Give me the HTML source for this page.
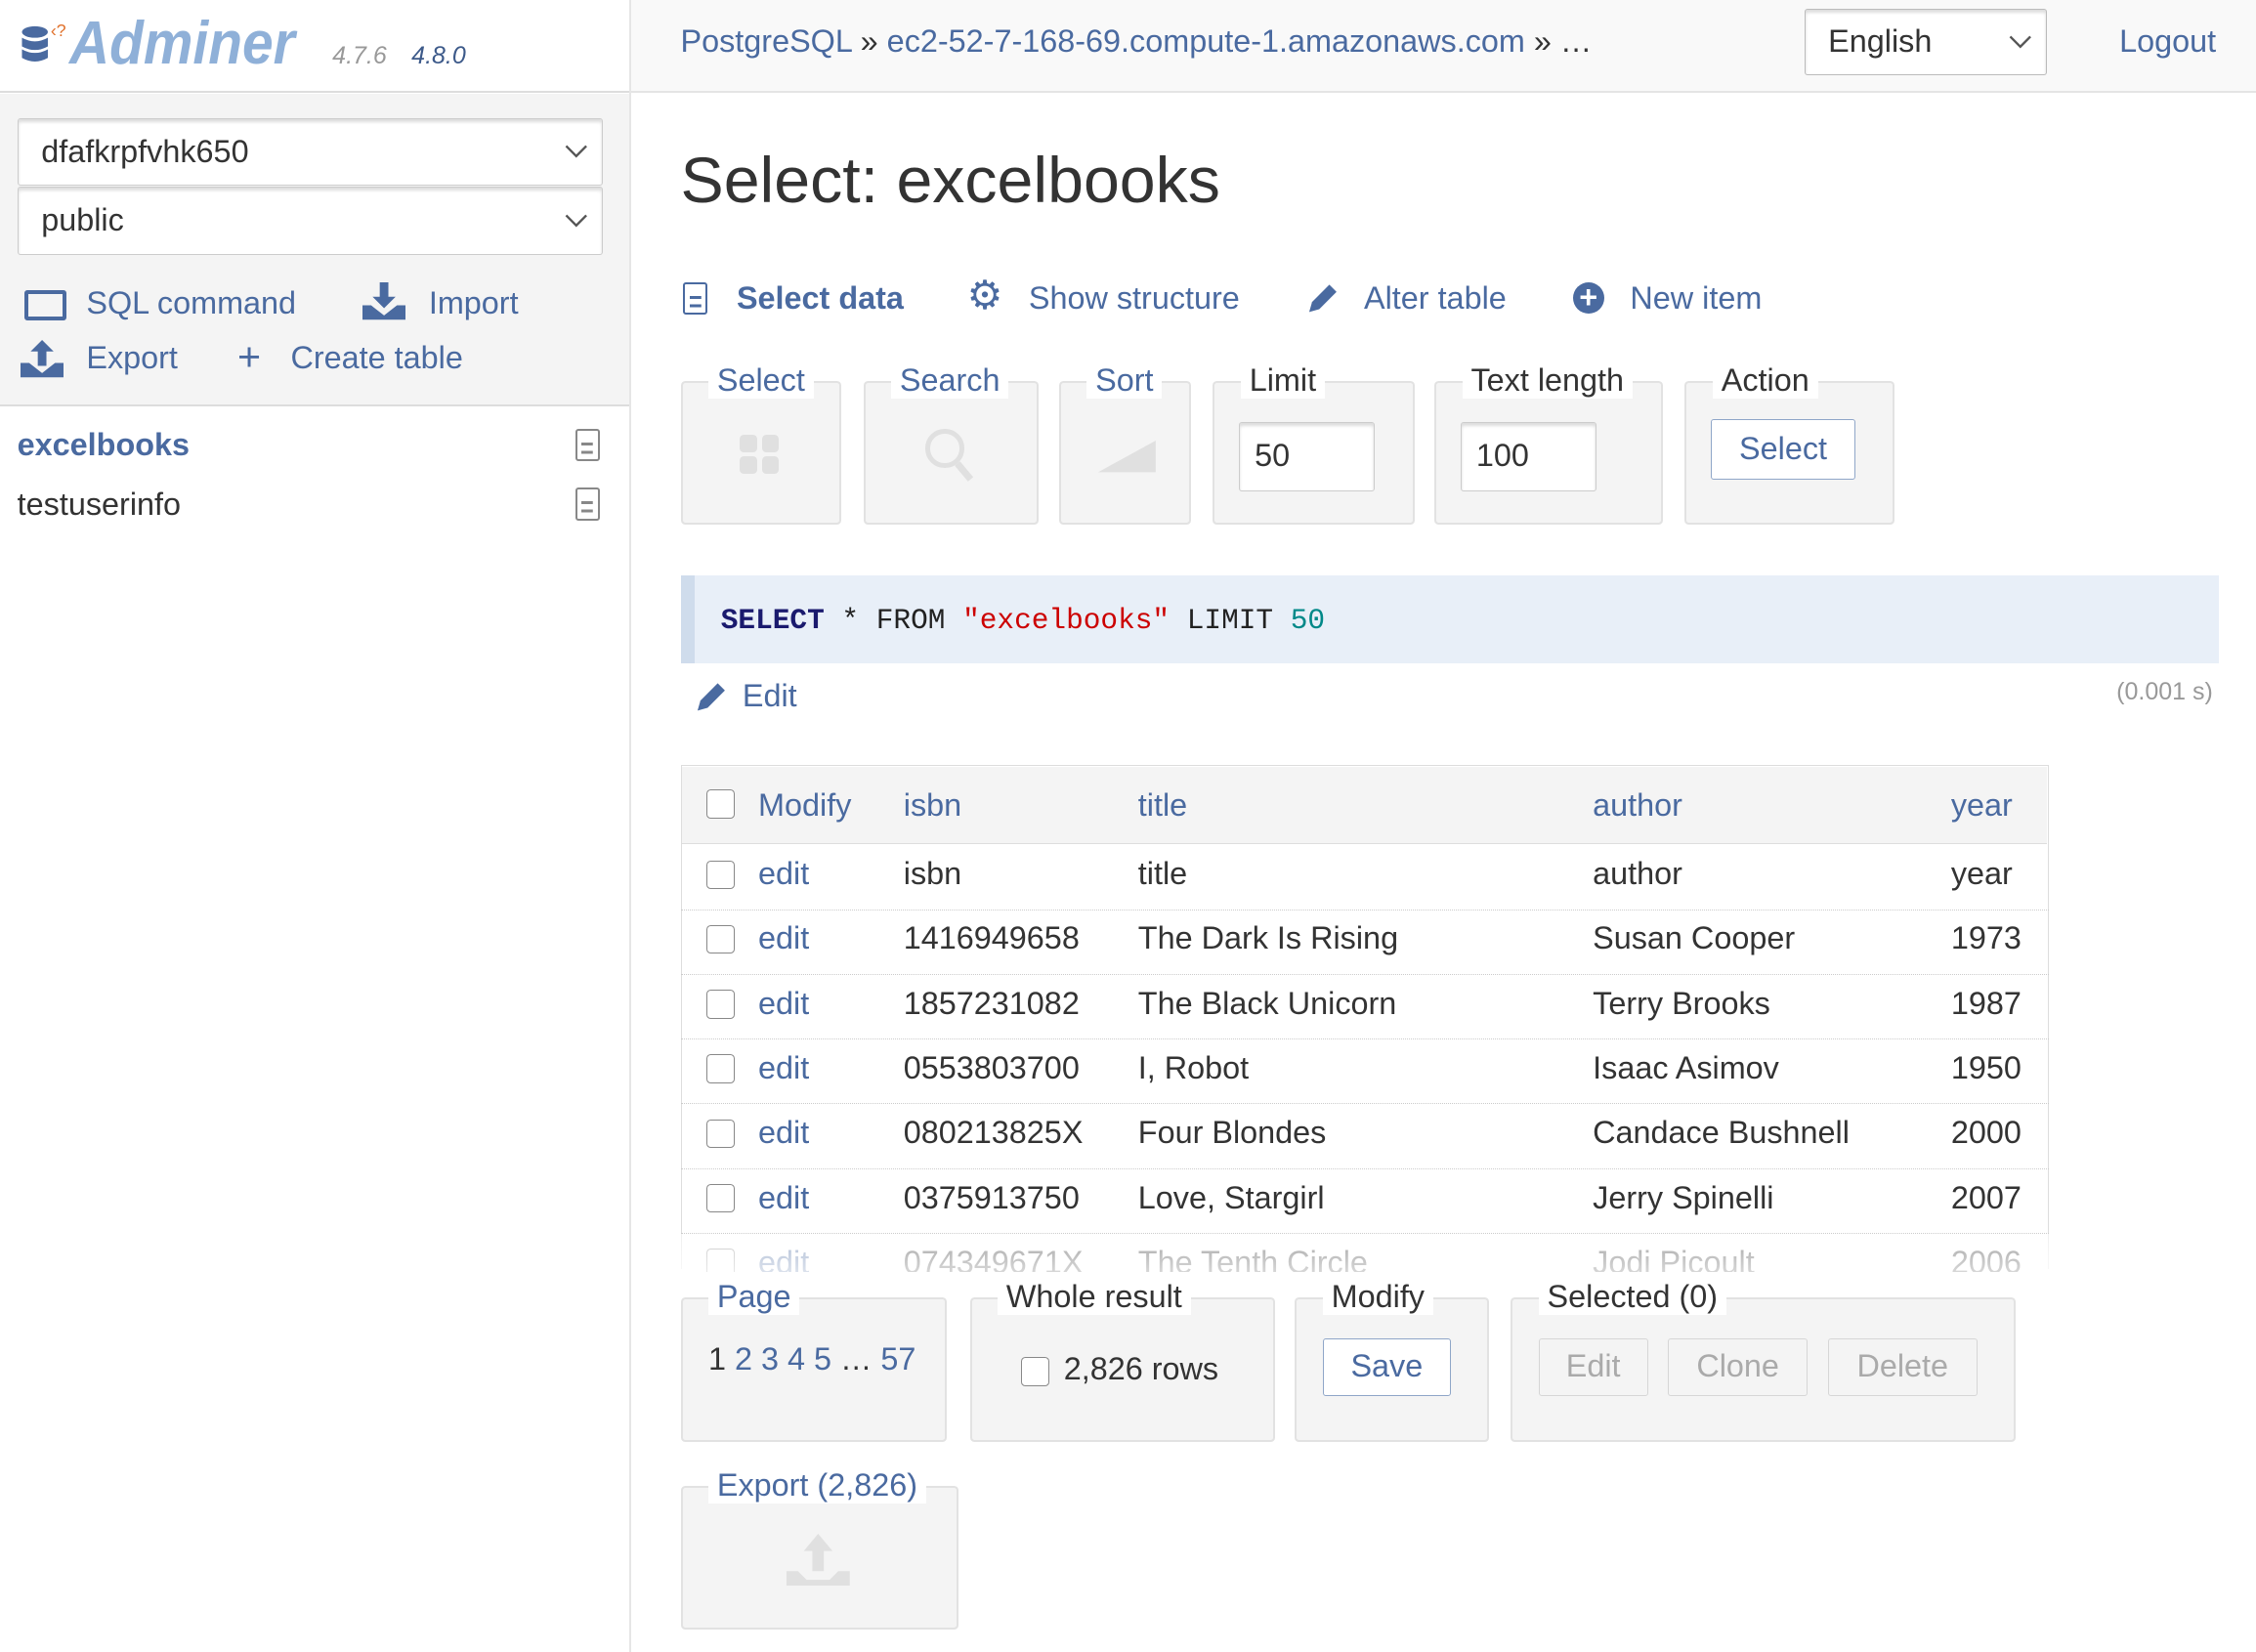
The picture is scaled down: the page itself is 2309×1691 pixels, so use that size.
<!DOCTYPE html>
<html><head><meta charset="utf-8"><style>
html,body{margin:0;padding:0;background:#fff;overflow:hidden}
body{width:1568px;height:1148px;zoom:1.47258;position:relative;font-family:"Liberation Sans",Arial,sans-serif;color:#333;font-size:22px}
.a{position:absolute;white-space:nowrap}
.l{color:#4a6aa0}
.fs{position:absolute;border:2px solid #e2e2e2;border-radius:3px;background:#f4f4f4;box-sizing:border-box}
.lg{position:absolute;top:-15px;background:#fff;padding:0 6px;font-size:22px;line-height:26px}
.inp{position:absolute;background:#fff;border:1px solid #ccc;box-shadow:inset 0 2px 2px #ddd;border-radius:2px;box-sizing:border-box;padding-left:10px}
.btn{position:absolute;background:#fff;border:1px solid #8fa6c8;border-radius:2px;box-sizing:border-box;text-align:center;color:#4a6aa0}
.dbtn{position:absolute;background:#f4f4f4;border:1px solid #d6d6d6;border-radius:2px;box-sizing:border-box;text-align:center;color:#aaa}
.cb{position:absolute;width:20px;height:20px;border:1px solid #888;border-radius:3px;background:#fff;box-sizing:border-box}
.row{position:absolute;left:473px;width:951px;height:45px;border-bottom:1px dotted #ccc}
.chev{position:absolute;right:10px;top:18px}
</style></head><body>
<div class="a" style="left:0;top:0;width:438px;height:63px;border-bottom:2px solid #ddd"></div>
<div class="a" style="left:0;top:65px;width:438px;height:216px;background:#f4f4f4;border-bottom:2px solid #ddd"></div>
<div class="a" style="left:437px;top:0;width:2px;height:1148px;background:#e6e6e6"></div>
<svg class="a" style="left:14px;top:14px" width="48" height="36" viewBox="0 0 48 36"><ellipse cx="10" cy="8" rx="9" ry="4" fill="#4a6aa0"/><path d="M1 12 q9 5 18 0 v6 q-9 5 -18 0z M1 20 q9 5 18 0 v6 q-9 5 -18 0z" fill="#4a6aa0"/><text x="21" y="11" font-size="12" fill="#e0702a" font-family="Liberation Sans">‹?</text></svg>
<div class="a" style="left:48px;top:6px;font-size:42px;font-style:italic;font-weight:bold;color:#8fb0d8;transform:scaleX(0.92);transform-origin:left">Adminer</div>
<div class="a" style="left:231px;top:29px;font-size:17px;font-style:italic;color:#999">4.7.6</div>
<div class="a" style="left:286px;top:29px;font-size:17px;font-style:italic;color:#3d5a8a">4.8.0</div>
<div class="inp" style="left:12px;top:82px;width:407px;height:47px;line-height:45px;padding-left:16px">dfafkrpfvhk650<svg class="chev" width="16" height="10"><path d="M1 1l7 7 7-7" stroke="#555" stroke-width="1.6" fill="none"/></svg></div>
<div class="inp" style="left:12px;top:130px;width:407px;height:47px;line-height:45px;padding-left:16px">public<svg class="chev" width="16" height="10"><path d="M1 1l7 7 7-7" stroke="#555" stroke-width="1.6" fill="none"/></svg></div>
<div class="a" style="left:17px;top:202px;width:24px;height:15px;border:3px solid #4a6aa0;border-radius:2px"></div>
<div class="a l" style="left:60px;top:198px">SQL command</div>
<svg class="a" style="left:252px;top:196px" width="30" height="28" viewBox="0 0 30 28"><path d="M12 0h6v10h5l-8 8-8-8h5z M0 16h6l9 7 9-7h6v10H0z" fill="#4a6aa0"/></svg>
<div class="a l" style="left:298px;top:198px">Import</div>
<svg class="a" style="left:14px;top:236px" width="30" height="28" viewBox="0 0 30 28"><path d="M15 0l8 8h-5v10h-6V8H7z M0 16h6l9 7 9-7h6v10H0z" fill="#4a6aa0"/></svg>
<div class="a l" style="left:60px;top:236px">Export</div>
<div class="a l" style="left:165px;top:232px;font-size:28px">+</div>
<div class="a l" style="left:202px;top:236px">Create table</div>
<div class="a l" style="left:12px;top:297px;font-weight:bold">excelbooks</div>
<div class="a" style="left:12px;top:338px">testuserinfo</div>
<div class="a" style="left:400px;top:298px;width:14px;height:20px;border:2px solid #888;border-radius:2px;background:repeating-linear-gradient(#fff 0 4px,#888 4px 6px) 3px 4px/8px 12px no-repeat"></div>
<div class="a" style="left:400px;top:339px;width:14px;height:20px;border:2px solid #888;border-radius:2px;background:repeating-linear-gradient(#fff 0 4px,#888 4px 6px) 3px 4px/8px 12px no-repeat"></div>
<div class="a" style="left:439px;top:0;width:1129px;height:63px;background:#f9f9f9;border-bottom:2px solid #e4e4e4"></div>
<div class="a l" style="left:473px;top:16px">PostgreSQL <span style="color:#333">»</span> ec2-52-7-168-69.compute-1.amazonaws.com <span style="color:#333">» …</span></div>
<div class="inp" style="left:1254px;top:6px;width:169px;height:46px;line-height:44px;padding-left:16px;border-color:#bbb">English<svg class="chev" width="16" height="10"><path d="M1 1l7 7 7-7" stroke="#555" stroke-width="1.6" fill="none"/></svg></div>
<div class="a l" style="left:1473px;top:16px">Logout</div>
<div class="a" style="left:473px;top:100px;font-size:45px">Select: excelbooks</div>
<div class="a" style="left:475px;top:196px;width:14px;height:20px;border:2px solid #4a6aa0;border-radius:2px;background:repeating-linear-gradient(#fff 0 4px,#4a6aa0 4px 6px) 3px 4px/8px 12px no-repeat"></div>
<div class="a l" style="left:512px;top:195px;font-weight:bold">Select data</div>
<div class="a l" style="left:672px;top:189px;font-size:28px">⚙</div>
<div class="a l" style="left:715px;top:195px">Show structure</div>
<svg class="a" style="left:908px;top:195px" width="24" height="24"><path d="M2 22l2-7 12-12 5 5-12 12z" fill="#4a6aa0"/></svg>
<div class="a l" style="left:948px;top:195px">Alter table</div>
<div class="a" style="left:1093px;top:196px;width:22px;height:22px;border-radius:50%;background:#4a6aa0;color:#fff;text-align:center;line-height:21px;font-weight:bold;font-size:22px">+</div>
<div class="a l" style="left:1133px;top:195px">New item</div>

<div class="fs" style="left:473px;top:265px;width:112px;height:100px"><div class="lg l" style="left:18px">Select</div>
<div class="a" style="left:40px;top:36px;width:12px;height:12px;background:#e0e0e0;border-radius:3px"></div><div class="a" style="left:55px;top:36px;width:12px;height:12px;background:#e0e0e0;border-radius:3px"></div><div class="a" style="left:40px;top:51px;width:12px;height:12px;background:#e0e0e0;border-radius:3px"></div><div class="a" style="left:55px;top:51px;width:12px;height:12px;background:#e0e0e0;border-radius:3px"></div></div>
<div class="fs" style="left:600px;top:265px;width:122px;height:100px"><div class="lg l" style="left:18px">Search</div>
<div class="a" style="left:42px;top:32px;width:20px;height:20px;border:4px solid #e0e0e0;border-radius:50%"></div><div class="a" style="left:66px;top:54px;width:5px;height:14px;background:#e0e0e0;transform:rotate(-40deg)"></div></div>
<div class="fs" style="left:736px;top:265px;width:92px;height:100px"><div class="lg l" style="left:18px">Sort</div>
<svg class="a" style="left:24px;top:38px" width="44" height="26"><path d="M42 2V24H2z" fill="#e0e0e0"/></svg></div>
<div class="fs" style="left:843px;top:265px;width:140px;height:100px"><div class="lg" style="left:18px">Limit</div>
<div class="inp" style="left:17px;top:27px;width:94px;height:48px;line-height:46px">50</div></div>
<div class="fs" style="left:997px;top:265px;width:159px;height:100px"><div class="lg" style="left:18px">Text length</div>
<div class="inp" style="left:17px;top:27px;width:94px;height:48px;line-height:46px">100</div></div>
<div class="fs" style="left:1171px;top:265px;width:146px;height:100px"><div class="lg" style="left:18px">Action</div>
<div class="btn" style="left:17px;top:25px;width:100px;height:42px;line-height:40px">Select</div></div>

<div class="a" style="left:473px;top:400px;width:1069px;height:61px;background:#e8eff8;border-left:10px solid #cfdcec;box-sizing:border-box"></div>
<div class="a" style="left:501px;top:420px;font-family:'Liberation Mono',monospace;font-size:20px;color:#222"><b style="color:#1a1a6e">SELECT</b> * FROM <span style="color:#c00">"excelbooks"</span> LIMIT <span style="color:#088">50</span></div>
<svg class="a" style="left:483px;top:472px" width="24" height="24"><path d="M2 22l2-7 12-12 5 5-12 12z" fill="#4a6aa0"/></svg>
<div class="a l" style="left:516px;top:471px">Edit</div>
<div class="a" style="left:1471px;top:471px;font-size:17px;color:#999">(0.001 s)</div>

<div class="a" style="left:473px;top:532px;width:951px;height:350px;border:1px solid #ddd;border-bottom:none;box-sizing:border-box"></div>
<div class="a" style="left:474px;top:533px;width:949px;height:53px;background:#f4f4f4;border-bottom:1px solid #ddd"></div>
<div class="cb" style="left:491px;top:549px"></div>
<div class="a l" style="left:527px;top:547px">Modify</div><div class="a l" style="left:628px;top:547px">isbn</div><div class="a l" style="left:791px;top:547px">title</div><div class="a l" style="left:1107px;top:547px">author</div><div class="a l" style="left:1356px;top:547px">year</div>
<div class="row" style="top:587px"></div><div class="row" style="top:632px"></div><div class="row" style="top:677px"></div><div class="row" style="top:722px"></div><div class="row" style="top:767px"></div><div class="row" style="top:812px"></div>
<div class="cb" style="left:491px;top:598px"></div><div class="a l" style="left:527px;top:595px">edit</div><div class="a" style="left:628px;top:595px">isbn</div><div class="a" style="left:791px;top:595px">title</div><div class="a" style="left:1107px;top:595px">author</div><div class="a" style="left:1356px;top:595px">year</div>
<div class="cb" style="left:491px;top:643px"></div><div class="a l" style="left:527px;top:640px">edit</div><div class="a" style="left:628px;top:640px">1416949658</div><div class="a" style="left:791px;top:640px">The Dark Is Rising</div><div class="a" style="left:1107px;top:640px">Susan Cooper</div><div class="a" style="left:1356px;top:640px">1973</div>
<div class="cb" style="left:491px;top:688px"></div><div class="a l" style="left:527px;top:685px">edit</div><div class="a" style="left:628px;top:685px">1857231082</div><div class="a" style="left:791px;top:685px">The Black Unicorn</div><div class="a" style="left:1107px;top:685px">Terry Brooks</div><div class="a" style="left:1356px;top:685px">1987</div>
<div class="cb" style="left:491px;top:733px"></div><div class="a l" style="left:527px;top:730px">edit</div><div class="a" style="left:628px;top:730px">0553803700</div><div class="a" style="left:791px;top:730px">I, Robot</div><div class="a" style="left:1107px;top:730px">Isaac Asimov</div><div class="a" style="left:1356px;top:730px">1950</div>
<div class="cb" style="left:491px;top:778px"></div><div class="a l" style="left:527px;top:775px">edit</div><div class="a" style="left:628px;top:775px">080213825X</div><div class="a" style="left:791px;top:775px">Four Blondes</div><div class="a" style="left:1107px;top:775px">Candace Bushnell</div><div class="a" style="left:1356px;top:775px">2000</div>
<div class="cb" style="left:491px;top:823px"></div><div class="a l" style="left:527px;top:820px">edit</div><div class="a" style="left:628px;top:820px">0375913750</div><div class="a" style="left:791px;top:820px">Love, Stargirl</div><div class="a" style="left:1107px;top:820px">Jerry Spinelli</div><div class="a" style="left:1356px;top:820px">2007</div>
<div class="cb" style="left:491px;top:868px"></div><div class="a l" style="left:527px;top:865px">edit</div><div class="a" style="left:628px;top:865px">074349671X</div><div class="a" style="left:791px;top:865px">The Tenth Circle</div><div class="a" style="left:1107px;top:865px">Jodi Picoult</div><div class="a" style="left:1356px;top:865px">2006</div>
<div class="a" style="left:470px;top:858px;width:960px;height:26px;background:linear-gradient(rgba(255,255,255,.55),rgba(255,255,255,.8))"></div>
<div class="a" style="left:470px;top:884px;width:960px;height:10px;background:#fff"></div>

<div class="fs" style="left:473px;top:902px;width:185px;height:100px"><div class="lg l" style="left:18px">Page</div>
<div class="a" style="left:18px;top:29px">1 <span class="l">2 3 4 5</span> … <span class="l">57</span></div></div>
<div class="fs" style="left:674px;top:902px;width:212px;height:100px"><div class="lg" style="left:18px">Whole result</div>
<div class="cb" style="left:34px;top:40px"></div><div class="a" style="left:64px;top:36px">2,826 rows</div></div>
<div class="fs" style="left:900px;top:902px;width:135px;height:100px"><div class="lg" style="left:18px">Modify</div>
<div class="btn" style="left:18px;top:27px;width:89px;height:40px;line-height:38px">Save</div></div>
<div class="fs" style="left:1050px;top:902px;width:351px;height:100px"><div class="lg" style="left:18px">Selected (0)</div>
<div class="dbtn" style="left:18px;top:27px;width:76px;height:40px;line-height:38px">Edit</div>
<div class="dbtn" style="left:108px;top:27px;width:97px;height:40px;line-height:38px">Clone</div>
<div class="dbtn" style="left:219px;top:27px;width:104px;height:40px;line-height:38px">Delete</div></div>
<div class="fs" style="left:473px;top:1033px;width:193px;height:100px"><div class="lg l" style="left:18px">Export (2,826)</div>
<svg class="a" style="left:70px;top:30px" width="48" height="42"><path d="M24 2l10 12h-6v14h-8V14h-6z M2 28h8l6 6h16l6-6h8v10H2z" fill="#e0e0e0"/></svg></div>
</body></html>
